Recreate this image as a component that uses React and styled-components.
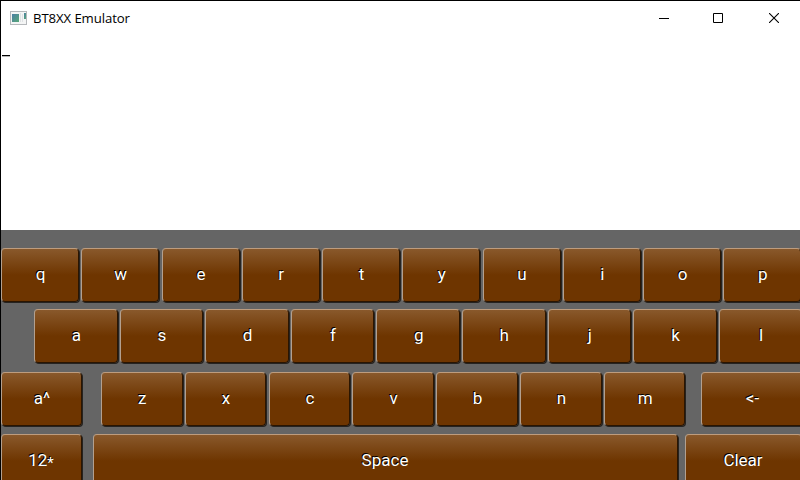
import React from 'react';
import styled, { createGlobalStyle } from 'styled-components';

const GlobalStyle = createGlobalStyle`
  * { box-sizing: border-box; }
  body { margin: 0; background: #fff; overflow: hidden; }
`;

const Window = styled.div`
  width: 800px;
  height: 480px;
  display: flex;
  flex-direction: column;
  overflow: hidden;
  background: #fff;
  border: solid #000;
  border-width: 1px 0 0 1px;
`;

const TitleBar = styled.header`
  height: 34px;
  flex: none;
  display: flex;
  align-items: center;
  padding-left: 9px;
`;

const Title = styled.h1`
  margin: 0 auto 0 6px;
  font: 400 13.2px/16px 'Open Sans', 'Noto Sans', sans-serif;
  letter-spacing: -0.1px;
  color: #000;
  white-space: nowrap;
`;

const WindowControls = styled.div`
  display: flex;
  height: 34px;
`;

const WindowButton = styled.button`
  width: ${(p) => p.$width}px;
  height: 34px;
  padding: 0 0 0 ${(p) => p.$inset}px;
  border: 0;
  background: transparent;
  display: flex;
  align-items: center;
`;

const TextArea = styled.main`
  height: 195px;
  flex: none;
  padding: 20px 0 0 1px;
`;

const Cursor = styled.div`
  width: 8px;
  height: 2px;
  background: linear-gradient(#000 50%, #b8b8b8 50%);
`;

const Keyboard = styled.section`
  flex: none;
  height: 250px;
  background: #656565;
  padding-top: 18px;
  display: flex;
  flex-direction: column;
`;

const KeyRow = styled.div`
  display: flex;
  flex: none;
  height: 55px;
  margin-bottom: ${(p) => p.$after || 0}px;
  padding-left: ${(p) => p.$indent || 0}px;
`;

const Key = styled.button`
  flex: none;
  width: ${(p) => p.$width - 1}px;
  height: 54px;
  margin-right: ${(p) => p.$gap + 1}px;
  padding: ${(p) => (p.$wide ? '0 1px 2px 0' : '0 0 2px 1px')};
  display: flex;
  align-items: center;
  justify-content: center;
  border: solid;
  border-width: 1px;
  border-color: #bd9c7e #2b1500 #2b1500 #b3a08f;
  border-radius: 4px;
  box-shadow: 1px 1px 0 #252321;
  background: linear-gradient(#8a5a2d 0, #6e3500 27px) border-box;
  color: #fff;
  font: 400 17px/20px Roboto, sans-serif;
  text-shadow: -1px -1px 0 #000;
`;

const LowStar = styled.span`
  margin-top: 5px;
  font-size: 15px;
`;

const AppIcon = () => (
  <svg width="17" height="14" viewBox="0 0 17 14">
    <defs>
      <linearGradient id="screen" x1="0" y1="0" x2="1" y2="1">
        <stop offset="0" stopColor="#4b7fa4" />
        <stop offset="1" stopColor="#58a878" />
      </linearGradient>
    </defs>
    <rect x=".5" y=".5" width="16" height="13" fill="#f4f5f5" stroke="#b5b8bb" />
    <rect x="2" y="3" width="7" height="8" fill="url(#screen)" />
    <path d="M10.5 2v9M12.5 3v8" stroke="#dfe2e4" />
    <rect x="14" y="2" width="2" height="6" fill="url(#screen)" />
  </svg>
);

const MinimizeIcon = () => (
  <svg width="10" height="10" viewBox="0 0 10 10"><path d="M0 5.5h10" stroke="#000" /></svg>
);
const MaximizeIcon = () => (
  <svg width="10" height="10" viewBox="0 0 10 10"><path d="M.5.5h9v9h-9z" fill="none" stroke="#000" /></svg>
);
const CloseIcon = () => (
  <svg width="10" height="10" viewBox="0 0 10 10"><path d="M0 0l10 10M10 0L0 10" stroke="#000" strokeWidth="1.1" /></svg>
);

const letters = (text, width, gap) => [...text].map((label) => ({ label, width, gap }));

const rows = [
  { after: 6, keys: letters('qwertyuiop', 79, 1.25) },
  { indent: 33, after: 8, keys: letters('asdfghjkl', 84.5, 1.12) },
  {
    after: 7,
    keys: [
      { label: 'a^', width: 82, gap: 18 },
      ...letters('zxcvbn', 82.5, 1.33),
      { label: 'm', width: 82.5, gap: 14.5 },
      { label: '<-', width: 103, gap: 0 },
    ],
  },
  {
    keys: [
      { label: '12', star: true, wide: true, width: 82, gap: 10 },
      { label: 'Space', wide: true, width: 586, gap: 6 },
      { label: 'Clear', wide: true, width: 118, gap: 0 },
    ],
  },
];

export default function App() {
  return (
    <>
      <GlobalStyle />
      <Window>
        <TitleBar>
          <AppIcon />
          <Title>BT8XX Emulator</Title>
          <WindowControls>
            <WindowButton $width={54} $inset={0} aria-label="Minimize"><MinimizeIcon /></WindowButton>
            <WindowButton $width={55} $inset={0} aria-label="Maximize"><MaximizeIcon /></WindowButton>
            <WindowButton $width={32} $inset={1} aria-label="Close"><CloseIcon /></WindowButton>
          </WindowControls>
        </TitleBar>
        <TextArea><Cursor /></TextArea>
        <Keyboard>
          {rows.map((row, i) => (
            <KeyRow key={i} $indent={row.indent} $after={row.after}>
              {row.keys.map((k) => (
                <Key key={k.label} $width={k.width} $gap={k.gap} $wide={k.wide}>
                  {k.label}
                  {k.star && <LowStar>*</LowStar>}
                </Key>
              ))}
            </KeyRow>
          ))}
        </Keyboard>
      </Window>
    </>
  );
}
